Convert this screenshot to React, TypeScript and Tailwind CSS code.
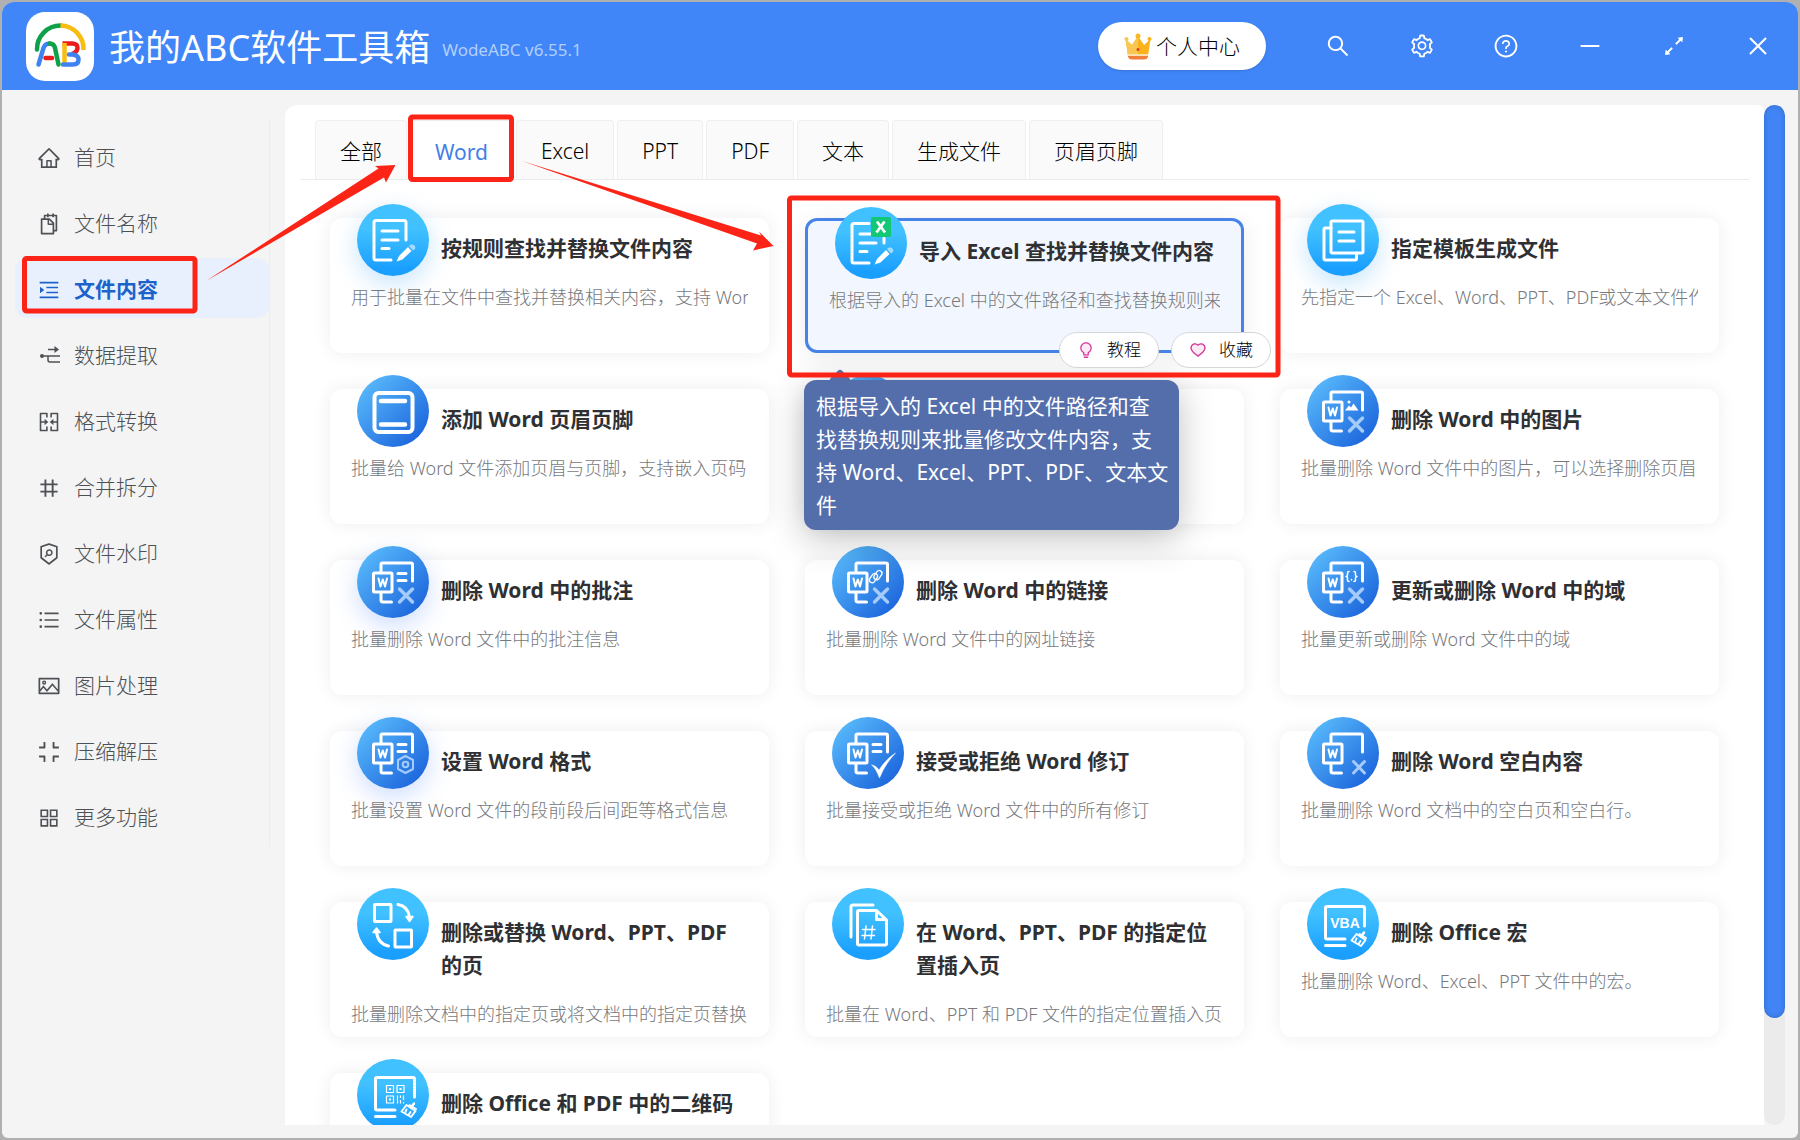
import type { ReactNode } from "react";
import {
  AiFillBulb,
  AiFillHeart,
  AiOutlineAppstore,
  AiOutlineArrowsAlt,
  AiOutlineBulb,
  AiOutlineClose,
  AiOutlineCompress,
  AiOutlineHeart,
  AiOutlineHome,
  AiOutlineMenuUnfold,
  AiOutlineMergeCells,
  AiOutlineMinus,
  AiOutlineNumber,
  AiOutlinePicture,
  AiOutlineQuestionCircle,
  AiOutlineSearch,
  AiOutlineSecurityScan,
  AiOutlineSetting,
  AiOutlineSnippets,
  AiOutlineUnorderedList,
} from "react-icons/ai";

/* ---------- Brand drawings ---------- */

function Logo() {
  return (
    <svg viewBox="0 0 68 69" className="h-[69px] w-[68px] shrink-0" aria-hidden="true">
      <rect width="68" height="69" rx="19" fill="#fff" />
      <g fill="none" strokeWidth="4.500">
        <path d="M11 37.500 A23.500 23.500 0 0 1 34.500 13.500" stroke="#0fa04a" strokeLinecap="round" />
        <path d="M34.500 13.500 A23.500 23.500 0 0 1 57.500 38" stroke="#fbbc10" />
        <path d="M36.500 31.500 H46.500 Q52 32 51.500 36 Q51 40.500 46 42" stroke="#ea1c1c" />
        <path d="M38.500 31 V53" stroke="#fbbc10" />
        <path d="M43 42.500 H47 Q52.500 43.500 52.500 47.500 Q52.500 52.500 47 52.500 H37" stroke="#3f83f0" strokeLinecap="round" />
        <path d="M12.500 52.500 L17.500 36 Q19 31.500 23.500 31.500" stroke="#3f83f0" strokeLinecap="round" />
        <path d="M19.500 46 H26" stroke="#ea1c1c" strokeLinecap="round" />
        <path d="M23.500 31.500 Q28 31.500 29 36 L32.500 52.500" stroke="#0fa04a" strokeLinecap="round" />
      </g>
    </svg>
  );
}

function Crown() {
  return (
    <svg viewBox="0 0 28 28" className="size-7" aria-hidden="true">
      <path d="M1.500 6 L8 12 L14 3 L20 12 L26.500 6 L24 23 H4 Z" fill="#fbb31c" />
      <path d="M1.500 6 L8 12 L14 3 V23 H4 Z" fill="#f9c653" />
      <path d="M4 21 H24 V24 Q23 26.500 20 26.500 H8 Q5 26.500 4 24 Z" fill="#f07f3c" />
      <path d="M4 21 H24 V23 H4 Z" fill="#fde0b0" />
      <circle cx="2.500" cy="6" r="2" fill="#f9c653" />
      <circle cx="25.500" cy="6" r="2" fill="#fbb31c" />
      <circle cx="14" cy="3" r="2.500" fill="#f9b62a" />
      <circle cx="14" cy="16.500" r="1.500" fill="#d8401f" />
    </svg>
  );
}

function ExtractIcon() {
  return (
    <svg viewBox="0 0 21 21" className="size-[21px]" fill="none" stroke="currentColor" strokeWidth="1.500" aria-hidden="true">
      <circle cx="3" cy="11" r="2" fill="currentColor" stroke="none" />
      <path d="M3 11 H21 M9 11 V15 Q9 17 11 17 H21 M9 4.500 H18" />
      <path d="M15.500 1 L20 4.500 L15.500 8 Z" fill="currentColor" stroke="none" />
    </svg>
  );
}

/* ---------- Feature glyphs, drawn on a 72px disc ---------- */

function Glyph({ children }: { children: ReactNode }) {
  return (
    <svg
      viewBox="0 0 72 72"
      className="size-[72px]"
      fill="none"
      stroke="#fff"
      strokeWidth="3"
      strokeLinecap="round"
      strokeLinejoin="round"
      aria-hidden="true"
    >
      {children}
    </svg>
  );
}

function EditDoc({ excel = false }: { excel?: boolean }) {
  return (
    <Glyph>
      <path d={excel ? "M34 16.500 H19 Q17 16.500 17 18.500 V54 Q17 56 19 56 H34 M49 31 V36" : "M34 56 H19 Q17 56 17 54 V18.500 Q17 16.500 19 16.500 H47 Q49 16.500 49 18.500 V36"} />
      <path d={excel ? "M25 27 H36 M25 36 H41 M25 44.500 H32" : "M25 27 H41 M25 36 H41 M25 44.500 H32"} />
      <path d="M39.500 57.500 L42 52 L51 43 L54.500 47 L45.500 55.500 Z" fill="#fff" stroke="none" />
      <path d="M52 42 L54 40.500 Q56 40 57.500 41.500 Q59 43 58 45 L56 46.500 Z" fill="#a4dcff" stroke="none" />
      {excel && (
        <>
          <rect x="36" y="10" width="20" height="20" rx="1.500" fill="#12c877" stroke="none" />
          <path d="M42 14.500 L50 25.500 M49.500 14.500 L41.500 25.500" strokeWidth="2.800" strokeLinecap="butt" />
        </>
      )}
    </Glyph>
  );
}

function TemplateGlyph() {
  return (
    <Glyph>
      <rect x="24" y="17" width="32" height="32" rx="1.500" />
      <path d="M24 24 H18.500 Q17 24 17 25.500 V54.500 Q17 56 18.500 56 H48 Q49.500 56 49.500 54.500 V49" />
      <path d="M32 28 H47 M32 37 H47" />
    </Glyph>
  );
}

function HeaderFooterGlyph() {
  return (
    <Glyph>
      <rect x="17.500" y="18" width="38" height="39" rx="4" strokeWidth="4" />
      <path d="M24 26 H48 M24 49.500 H48" strokeWidth="4.500" />
    </Glyph>
  );
}

function WordPage({ lines = false, cross, children }: { lines?: boolean; cross?: "large" | "small"; children?: ReactNode }) {
  return (
    <Glyph>
      <path d="M24 26 V18.500 Q24 17 25.500 17 H54 Q55.500 17 55.500 18.500 V35 M24 47 V54 Q24 56 26 56 H34.500" />
      <rect x="16.500" y="27" width="18.500" height="19" rx="1" />
      <path d="M21.500 32.500 L23.500 40.500 L25.800 33.500 L28 40.500 L30 32.500" strokeWidth="2" />
      {lines && <path d="M41 27.500 H49 M41 34.500 H49" />}
      {cross === "large" && <path d="M42.500 43 L55.500 56 M55.500 43 L42.500 56" stroke="#a5cbfb" strokeWidth="3.500" />}
      {cross === "small" && <path d="M46.500 44.500 L57.500 56 M57.500 44.500 L46.500 56" stroke="#a5cbfb" strokeWidth="3" />}
      {children}
    </Glyph>
  );
}

function SwapGlyph() {
  return (
    <Glyph>
      <rect x="17.500" y="16.500" width="16.500" height="17" rx="0.500" />
      <rect x="38" y="42" width="16.500" height="17" rx="0.500" />
      <path d="M41 16.500 Q51 18 52.500 29 M31.500 58 Q21 56 19.500 44" />
      <path d="M49 28.500 L56 28.500 L52.500 33.500 Z M16 44.500 L23 44.500 L19.500 40 Z" fill="#fff" strokeWidth="1.500" />
    </Glyph>
  );
}

function NumberPageGlyph() {
  return (
    <Glyph>
      <path d="M19 49 V19 Q19 17 21 17 H41" />
      <path d="M25.500 24 Q25.500 22.500 27 22.500 H44.500 L54.500 32 V55.500 Q54.500 57 53 57 H27 Q25.500 57 25.500 55.500 Z M44.500 23 V31.500 H54" />
      <path d="M34 38 L32.500 51 M40.500 38 L39 51 M30.500 41.500 H43 M30 47.500 H42.500" strokeWidth="1.500" />
    </Glyph>
  );
}

function CleanScreen({ children }: { children: ReactNode }) {
  return (
    <Glyph>
      <path d="M38 51 H20 Q18.500 51 18.500 49.500 V20 Q18.500 18.500 20 18.500 H56 Q57.500 18.500 57.500 20 V38 M18.500 57.500 H38" />
      <path d="M57 44.500 L54 48.500" strokeWidth="2.500" />
      <path d="M49.500 46 L58.500 52 L54 58 L44.500 52.500 Z" strokeWidth="2" />
      <path d="M52.500 46 L59 50 M49.500 50.500 L48.500 53 M53.500 53 L51.500 56" strokeWidth="2" />
      {children}
    </Glyph>
  );
}

/* ---------- Data ---------- */

const navItems: { label: string; icon: ReactNode; active?: boolean }[] = [
  { label: "首页", icon: <AiOutlineHome /> },
  { label: "文件名称", icon: <AiOutlineSnippets /> },
  { label: "文件内容", icon: <AiOutlineMenuUnfold />, active: true },
  { label: "数据提取", icon: <ExtractIcon /> },
  { label: "格式转换", icon: <AiOutlineMergeCells /> },
  { label: "合并拆分", icon: <AiOutlineNumber /> },
  { label: "文件水印", icon: <AiOutlineSecurityScan /> },
  { label: "文件属性", icon: <AiOutlineUnorderedList /> },
  { label: "图片处理", icon: <AiOutlinePicture /> },
  { label: "压缩解压", icon: <AiOutlineCompress /> },
  { label: "更多功能", icon: <AiOutlineAppstore /> },
];

const tabs = ["全部", "Word", "Excel", "PPT", "PDF", "文本", "生成文件", "页眉页脚"];

const windowButtons = [
  { label: "搜索", icon: <AiOutlineSearch /> },
  { label: "设置", icon: <AiOutlineSetting /> },
  { label: "帮助", icon: <AiOutlineQuestionCircle /> },
  { label: "最小化", icon: <AiOutlineMinus /> },
  { label: "最大化", icon: <AiOutlineArrowsAlt /> },
  { label: "关闭", icon: <AiOutlineClose /> },
];

type Feature = {
  title: string;
  desc: string;
  icon: ReactNode;
  tone: "sky" | "blue";
  glow?: boolean;
  active?: boolean;
};

const features: Feature[] = [
  { title: "按规则查找并替换文件内容", desc: "用于批量在文件中查找并替换相关内容，支持 Wor", icon: <EditDoc />, tone: "sky", glow: true },
  { title: "导入 Excel 查找并替换文件内容", desc: "根据导入的 Excel 中的文件路径和查找替换规则来", icon: <EditDoc excel />, tone: "sky", active: true },
  { title: "指定模板生成文件", desc: "先指定一个 Excel、Word、PPT、PDF或文本文件作", icon: <TemplateGlyph />, tone: "sky", glow: true },
  { title: "添加 Word 页眉页脚", desc: "批量给 Word 文件添加页眉与页脚，支持嵌入页码", icon: <HeaderFooterGlyph />, tone: "blue" },
  { title: "", desc: "", icon: null, tone: "blue" },
  {
    title: "删除 Word 中的图片",
    desc: "批量删除 Word 文件中的图片，可以选择删除页眉",
    icon: (
      <WordPage cross="large">
        <path d="M38 35.500 L42 30.500 L44 32.500 L46.500 28.500 L51.500 35.500 Z" fill="#fff" stroke="none" />
        <circle cx="42" cy="27" r="1.500" fill="#fff" stroke="none" />
      </WordPage>
    ),
    tone: "blue",
  },
  { title: "删除 Word 中的批注", desc: "批量删除 Word 文件中的批注信息", icon: <WordPage lines cross="large" />, tone: "blue", glow: true },
  {
    title: "删除 Word 中的链接",
    desc: "批量删除 Word 文件中的网址链接",
    icon: (
      <WordPage cross="large">
        <g strokeWidth="1.300" transform="rotate(-55 43.5 30.500)">
          <rect x="36" y="27" width="10" height="5.500" rx="2.700" />
          <rect x="41" y="29" width="10" height="5.500" rx="2.700" />
        </g>
      </WordPage>
    ),
    tone: "blue",
  },
  {
    title: "更新或删除 Word 中的域",
    desc: "批量更新或删除 Word 文件中的域",
    icon: (
      <WordPage cross="large">
        <path
          d="M42 25.500 Q40.500 25.500 40.500 27 V29 Q40.500 30.500 39 30.500 Q40.500 30.500 40.500 32 V34 Q40.500 35.500 42 35.500 M47 25.500 Q48.500 25.500 48.500 27 V29 Q48.500 30.500 50 30.500 Q48.500 30.500 48.500 32 V34 Q48.500 35.500 47 35.500 M44.500 33.500 V34"
          strokeWidth="1.500"
        />
      </WordPage>
    ),
    tone: "blue",
  },
  {
    title: "设置 Word 格式",
    desc: "批量设置 Word 文件的段前段后间距等格式信息",
    icon: (
      <WordPage lines>
        <path d="M48.500 39 L56 43 V52 L48.500 56 L41 52 V43 Z" stroke="#a5cbfb" strokeWidth="2" />
        <circle cx="48.500" cy="47.500" r="2.800" stroke="#a5cbfb" strokeWidth="2" />
      </WordPage>
    ),
    tone: "blue",
    glow: true,
  },
  {
    title: "接受或拒绝 Word 修订",
    desc: "批量接受或拒绝 Word 文件中的所有修订",
    icon: (
      <WordPage lines>
        <path d="M40 48 Q44 48.500 47 53 Q54 42 63.500 36 Q53 47 47.500 61 Q44.500 52.500 40 48 Z" fill="#fff" strokeWidth="0.500" />
      </WordPage>
    ),
    tone: "blue",
  },
  { title: "删除 Word 空白内容", desc: "批量删除 Word 文档中的空白页和空白行。", icon: <WordPage cross="small" />, tone: "blue" },
  { title: "删除或替换 Word、PPT、PDF 的页", desc: "批量删除文档中的指定页或将文档中的指定页替换", icon: <SwapGlyph />, tone: "sky" },
  { title: "在 Word、PPT、PDF 的指定位置插入页", desc: "批量在 Word、PPT 和 PDF 文件的指定位置插入页。", icon: <NumberPageGlyph />, tone: "sky" },
  {
    title: "删除 Office 宏",
    desc: "批量删除 Word、Excel、PPT 文件中的宏。",
    icon: (
      <CleanScreen>
        <text x="38" y="40" textAnchor="middle" fill="#fff" stroke="none" fontSize="14" fontWeight="700" fontFamily="Liberation Sans, sans-serif">
          VBA
        </text>
      </CleanScreen>
    ),
    tone: "sky",
  },
  {
    title: "删除 Office 和 PDF 中的二维码",
    desc: "",
    icon: (
      <CleanScreen>
        <g strokeWidth="1.200" strokeLinecap="butt">
          <rect x="29.500" y="26.500" width="7" height="7" />
          <rect x="40" y="26.500" width="7" height="7" />
          <rect x="29.500" y="37" width="7" height="7" />
          <path d="M32 30 H34 M42.500 30 H44.500 M32 40.500 H34" strokeWidth="2" />
          <path d="M40.500 36.500 V44.500 M43.500 36.500 V39 M43.500 41 V44.500 M46.500 36.500 V41 M46.500 43 V44.500" />
        </g>
      </CleanScreen>
    ),
    tone: "sky",
  },
];

/* ---------- Parts ---------- */

const discTone = {
  sky: "bg-[linear-gradient(180deg,#41c1ff_35%,#1a9fff_90%)]",
  blue: "bg-[linear-gradient(135deg,#58b9fb_10%,#1b64dc_90%)]",
};

const discGlow = {
  sky: "shadow-[0_8px_24px_rgba(30,150,240,0.25)]",
  blue: "shadow-[0_8px_24px_rgba(60,120,250,0.25)]",
};

function PillButton({ label, outline, fill }: { label: string; outline: ReactNode; fill: ReactNode }) {
  return (
    <button type="button" className="flex h-9 items-center gap-3 rounded-full border border-[#d4d6da] bg-white px-[17px] text-[17px] font-light text-black">
      <span className="relative text-[18px] text-[#d63a9d]">
        <span className="absolute inset-0 opacity-10">{fill}</span>
        {outline}
      </span>
      {label}
    </button>
  );
}

function FeatureCard({ feature }: { feature: Feature }) {
  const { title, desc, icon, tone, glow, active } = feature;
  return (
    <article
      className={
        active
          ? "relative h-[135px] min-w-0 rounded-xl border-[3px] border-[#4783e6] bg-[#f2f7ff] shadow-[0_4px_24px_rgba(0,0,0,0.08)]"
          : "relative h-[135px] min-w-0 rounded-xl bg-white shadow-[0_0_18px_rgba(0,0,0,0.07)]"
      }
    >
      <div className="flex items-start gap-3 pr-[21px] pl-[27px]">
        <span className={`-mt-[14px] size-[72px] shrink-0 rounded-full ${discTone[tone]} ${glow ? discGlow[tone] : ""}`}>{icon}</span>
        <h2 className="pt-[14px] pb-[19px] text-[21px] leading-[33px] font-bold text-[#2f3033]">{title}</h2>
      </div>
      <p className="mx-[21px] overflow-hidden text-[18px] leading-[27px] font-light whitespace-nowrap text-[#77797d]">{desc}</p>
      {active && (
        <>
          <div className="absolute right-[-30px] bottom-[-18px] z-20 flex gap-3">
            <PillButton label="教程" outline={<AiOutlineBulb />} fill={<AiFillBulb />} />
            <PillButton label="收藏" outline={<AiOutlineHeart />} fill={<AiFillHeart />} />
          </div>
          <div
            role="tooltip"
            className="absolute top-[159px] left-[-4px] z-10 w-[375px] rounded-xl bg-[#546eac] px-3 pt-[10px] pb-2 text-[21px] leading-[33px] whitespace-nowrap text-white shadow-[0_8px_36px_rgba(0,0,0,0.25)]"
          >
            <span className="absolute -top-2 left-7 size-4 rotate-45 rounded-[3px] bg-[#546eac]" />
            根据导入的 Excel 中的文件路径和查
            <br />
            找替换规则来批量修改文件内容，支
            <br />持 Word、Excel、PPT、PDF、文本文
            <br />件
          </div>
        </>
      )}
    </article>
  );
}

/* Red call-outs that guide the reader from the menu to the tab to the card. */
function Annotations() {
  return (
    <svg viewBox="0 0 1800 1140" className="pointer-events-none absolute top-0 left-0 z-30 h-[1140px] w-[1800px]" aria-hidden="true">
      <g fill="none" stroke="#fb2417" strokeWidth="5">
        <rect x="24.500" y="258.500" width="170.500" height="52.500" rx="2" />
        <rect x="410.500" y="117" width="101" height="62.500" rx="2" />
        <rect x="789.500" y="198" width="488.500" height="177" rx="2" />
      </g>
      <g fill="#fb2417">
        <path d="M206 281 L378.500 168.500 L375 166 L395.500 165 L386 182.500 L384 177.500 Z" />
        <path d="M522 161 L761 235.500 L759 231.500 L773.500 246 L753 250.500 L757 243.500 Z" />
      </g>
    </svg>
  );
}

export default function App() {
  return (
    <div className="relative h-screen overflow-hidden bg-[#b0b0b0] p-0.5 font-['Noto_Sans','Noto_Sans_CJK_SC',sans-serif]">
      <div className="flex h-full flex-col overflow-hidden rounded-t-xl rounded-b-md bg-[#f4f4f4]">
        <header className="flex h-[88px] shrink-0 items-center bg-[#4086f8] pl-6 text-white">
          <Logo />
          <h1 className="ml-[15px] pt-1 text-[36px] leading-[48px] whitespace-nowrap">我的ABC软件工具箱</h1>
          <span className="ml-3 pt-2 text-[17px] whitespace-nowrap text-[#b3cffc]">WodeABC v6.55.1</span>
          <button type="button" className="mr-8 ml-auto flex h-12 w-[168px] shrink-0 items-center justify-center gap-1 rounded-full bg-white pt-0.5 text-[21px] font-light text-black shadow-sm">
            <Crown />
            个人中心
          </button>
          <div className="flex gap-1">
            {windowButtons.map((b) => (
              <button key={b.label} type="button" aria-label={b.label} className="flex h-12 w-20 items-center justify-center text-[26px]">
                {b.icon}
              </button>
            ))}
          </div>
        </header>

        <div className="flex min-h-0 flex-1 pt-[15px] pr-[13px] pb-[13px]">
          <aside className="w-[283px] shrink-0 pt-[15px] pr-[15px] pl-[13px]">
            <nav className="flex flex-col gap-1.5 border-r border-[#ececec] pt-1.5">
              {navItems.map((item) => (
                <a
                  key={item.label}
                  href="#"
                  className={
                    item.active
                      ? "flex h-[60px] items-center gap-[13px] rounded-xl bg-[#e8f0fe] pt-[3px] pl-[22px] text-[21px] font-bold text-[#1b63cb]"
                      : "flex h-[60px] items-center gap-[13px] rounded-xl pt-[3px] pl-[22px] text-[21px] font-light text-[#4d5055]"
                  }
                >
                  <span className="flex w-6 shrink-0 justify-center text-[24px]">{item.icon}</span>
                  {item.label}
                </a>
              ))}
            </nav>
          </aside>

          <main className="min-w-0 flex-1 overflow-hidden rounded-tl-xl rounded-tr-md bg-white px-[15px] pt-[15px]">
            <div role="tablist" className="flex gap-[3px] border-b border-[#ebecee] pl-[15px]">
              {tabs.map((tab) => (
                <button
                  key={tab}
                  type="button"
                  role="tab"
                  aria-selected={tab === "Word"}
                  className={
                    tab === "Word"
                      ? "-mb-px h-[60px] rounded-t border border-b-0 border-[#ebecee] bg-white px-6 pt-1 text-[21px] text-[#3f80ea]"
                      : "h-[59px] rounded-t border border-b-0 border-[#efefef] bg-[#fafafa] px-6 pt-1 text-[21px] font-light text-black"
                  }
                >
                  {tab}
                </button>
              ))}
            </div>

            <div className="grid grid-cols-3 gap-9 px-[30px] pt-[38px]">
              {features.map((feature, index) => (
                <FeatureCard key={index} feature={feature} />
              ))}
            </div>
          </main>

          <div className="flex w-[21px] shrink-0 flex-col rounded-full bg-[#ebebeb]">
            <div className="h-[913px] rounded-full bg-[#4084f5] shadow-[inset_0_0_5px_rgba(0,0,0,0.2)]" />
          </div>
        </div>
      </div>
      <Annotations />
    </div>
  );
}
